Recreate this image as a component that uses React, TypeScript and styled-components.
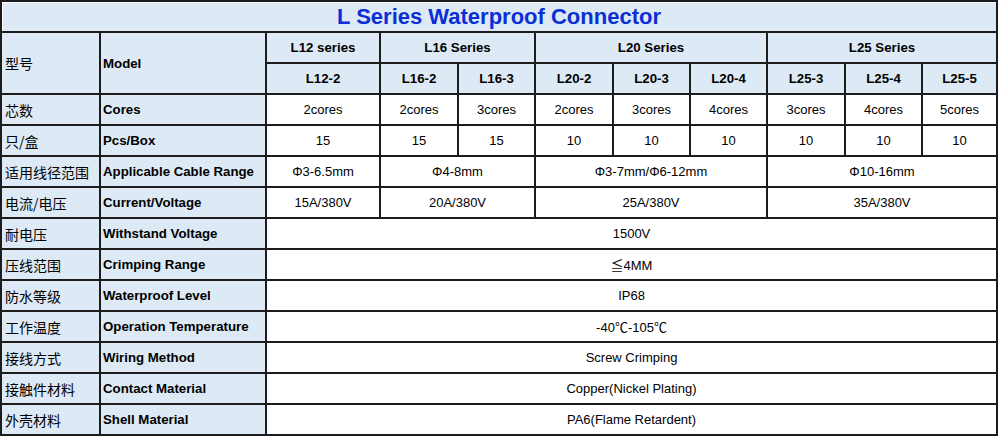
import { Fragment } from 'react'
import styled, { createGlobalStyle } from 'styled-components'

const GlobalStyle = createGlobalStyle`
  html, body {
    margin: 0;
    padding: 0;
    background: #ffffff;
  }
  body {
    font-family: 'Liberation Sans', Arial, 'Noto Sans CJK SC', sans-serif;
  }
`

const colors = {
  line: '#1c1c1c',
  blue: '#ddeaf6',
  white: '#ffffff',
  title: '#0b2fd4',
  text: '#000000',
}

// grid lines are the dark background showing through the 2px gaps
const Sheet = styled.div`
  display: inline-grid;
  grid-template-columns: 97px 164px 112px 76px 75px 76px 75px 75px 76px 75px 73px;
  grid-auto-rows: 29px;
  gap: 2px;
  padding: 2px;
  background: ${colors.line};
`

type Tone = 'head' | 'label' | 'data'

const Cell = styled.div<{ $span?: number; $rows?: number; $tone: Tone; $cn?: boolean }>`
  grid-column: span ${(p) => p.$span || 1};
  grid-row: span ${(p) => p.$rows || 1};
  display: flex;
  align-items: center;
  justify-content: ${(p) => (p.$tone === 'label' ? 'flex-start' : 'center')};
  padding: ${(p) => (p.$tone === 'label' ? (p.$cn ? '0 0 0 3px' : '0 0 0 2px') : '0')};
  background: ${(p) => (p.$tone === 'data' ? colors.white : colors.blue)};
  color: ${colors.text};
  font-size: ${(p) => (p.$cn ? '14px' : p.$tone === 'data' ? '13px' : '13.25px')};
  font-weight: ${(p) => (p.$tone === 'data' || p.$cn ? 400 : 700)};
  font-family: ${(p) =>
    p.$cn
      ? "'Noto Sans CJK SC', sans-serif"
      : "'Liberation Sans', Arial, 'Noto Sans CJK SC', sans-serif"};
  white-space: nowrap;
`

const TitleCell = styled.div`
  grid-column: span 11;
  display: flex;
  align-items: center;
  justify-content: center;
  background: ${colors.blue};
  box-shadow: inset 1px 1px 0 ${colors.white};
  color: ${colors.title};
  font-size: 22px;
  font-weight: 700;
  padding-top: 1px;
`

type Value = { text: string; span?: number }

type Row = { cn: string; en: string; values: Value[] }

const each = (vals: string[]): Value[] => vals.map((text) => ({ text }))
const all = (text: string): Value[] => [{ text, span: 9 }]

const series: Value[] = [
  { text: 'L12 series', span: 1 },
  { text: 'L16 Series', span: 2 },
  { text: 'L20 Series', span: 3 },
  { text: 'L25 Series', span: 3 },
]

const models = ['L12-2', 'L16-2', 'L16-3', 'L20-2', 'L20-3', 'L20-4', 'L25-3', 'L25-4', 'L25-5']

const rows: Row[] = [
  {
    cn: '芯数',
    en: 'Cores',
    values: each(['2cores', '2cores', '3cores', '2cores', '3cores', '4cores', '3cores', '4cores', '5cores']),
  },
  { cn: '只/盒', en: 'Pcs/Box', values: each(['15', '15', '15', '10', '10', '10', '10', '10', '10']) },
  {
    cn: '适用线径范围',
    en: 'Applicable Cable Range',
    values: [
      { text: 'Φ3-6.5mm', span: 1 },
      { text: 'Φ4-8mm', span: 2 },
      { text: 'Φ3-7mm/Φ6-12mm', span: 3 },
      { text: 'Φ10-16mm', span: 3 },
    ],
  },
  {
    cn: '电流/电压',
    en: 'Current/Voltage',
    values: [
      { text: '15A/380V', span: 1 },
      { text: '20A/380V', span: 2 },
      { text: '25A/380V', span: 3 },
      { text: '35A/380V', span: 3 },
    ],
  },
  { cn: '耐电压', en: 'Withstand Voltage', values: all('1500V') },
  { cn: '压线范围', en: 'Crimping Range', values: all('≦4MM') },
  { cn: '防水等级', en: 'Waterproof Level', values: all('IP68') },
  { cn: '工作温度', en: 'Operation Temperature', values: all('-40℃-105℃') },
  { cn: '接线方式', en: 'Wiring Method', values: all('Screw Crimping') },
  { cn: '接触件材料', en: 'Contact Material', values: all('Copper(Nickel Plating)') },
  { cn: '外壳材料', en: 'Shell Material', values: all('PA6(Flame Retardent)') },
]

const App = () => {
  return (
    <>
      <GlobalStyle />
      <Sheet>
        <TitleCell>L Series Waterproof Connector</TitleCell>

        <Cell $tone="label" $cn $rows={2}>
          型号
        </Cell>
        <Cell $tone="label" $rows={2}>
          Model
        </Cell>
        {series.map((s) => (
          <Cell key={s.text} $tone="head" $span={s.span}>
            {s.text}
          </Cell>
        ))}
        {models.map((m) => (
          <Cell key={m} $tone="head">
            {m}
          </Cell>
        ))}

        {rows.map((row) => (
          <Fragment key={row.en}>
            <Cell $tone="label" $cn>
              {row.cn}
            </Cell>
            <Cell $tone="label">{row.en}</Cell>
            {row.values.map((v, i) => (
              <Cell key={i} $tone="data" $span={v.span}>
                {v.text}
              </Cell>
            ))}
          </Fragment>
        ))}
      </Sheet>
    </>
  )
}

export default App
